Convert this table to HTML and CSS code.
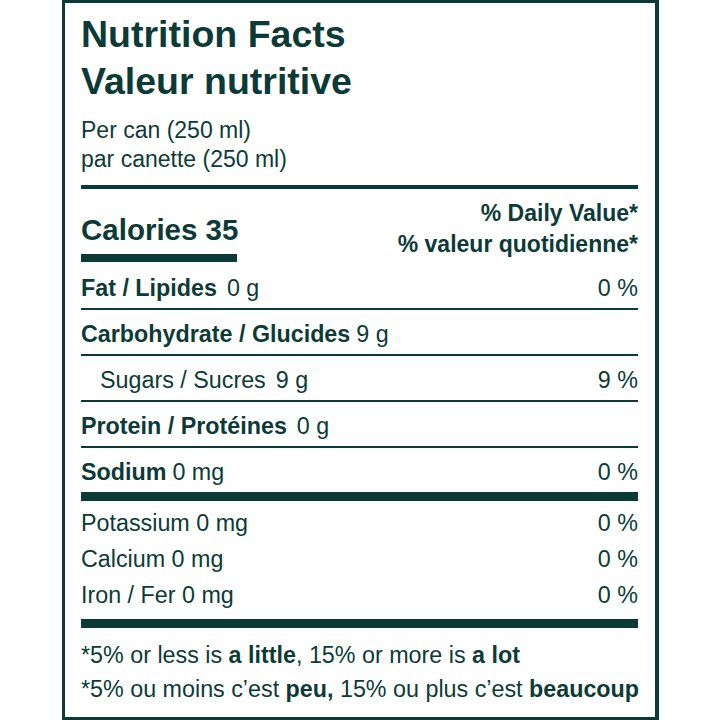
FILE: index.html
```html
<!DOCTYPE html>
<html lang="en">
<head>
<meta charset="utf-8">
<title>Nutrition Facts</title>
<link rel="stylesheet" href="styles.css">
</head>
<body>
<div class="label">
  <h1 class="title">Nutrition Facts<br>Valeur nutritive</h1>
  <p class="serving">Per can (250 ml)<br>par canette (250 ml)</p>
  <div class="rule-top"></div>
  <div class="cal-row">
    <div class="cal-left">
      <div class="calories">Calories 35</div>
      <div class="cal-bar"></div>
    </div>
    <div class="dv-head">% Daily Value*<br>% valeur quotidienne*</div>
  </div>
  <div class="row first"><span><b>Fat / Lipides</b><span class="amt">0 g</span></span><span>0 %</span></div>
  <div class="row"><span><b>Carbohydrate / Glucides</b><span class="amt sm">9 g</span></span><span></span></div>
  <div class="row indent"><span>Sugars / Sucres<span class="amt">9 g</span></span><span>9 %</span></div>
  <div class="row"><span><b>Protein / Protéines</b><span class="amt">0 g</span></span><span></span></div>
  <div class="row last"><span><b>Sodium</b><span class="amt sm">0 mg</span></span><span>0 %</span></div>
  <div class="bar"></div>
  <div class="minerals">
    <div class="mrow"><span>Potassium 0 mg</span><span>0 %</span></div>
    <div class="mrow"><span>Calcium 0 mg</span><span>0 %</span></div>
    <div class="mrow"><span>Iron / Fer 0 mg</span><span>0 %</span></div>
  </div>
  <div class="bar bar2"></div>
  <div class="foot">
    <p>*5% or less is <b>a little</b>, 15% or more is <b>a lot</b></p>
    <p>*5% ou moins c’est <b>peu,</b> 15% ou plus c’est <b>beaucoup</b></p>
  </div>
</div>
</body>
</html>
```

FILE: styles.css
```css
html, body {
  margin: 0;
  padding: 0;
  background: #ffffff;
}
body {
  font-family: "Liberation Sans", Arial, sans-serif;
  color: #0c3b37;
}
.label {
  box-sizing: border-box;
  margin-left: 62px;
  width: 597px;
  height: 720px;
  border: 3px solid #0c3b37;
  border-right-width: 4px;
  padding: 8px 17px 0 16px;
}
.title {
  margin: 0;
  font-size: 37.5px;
  line-height: 47px;
  font-weight: 700;
}
.serving {
  margin: 11px 0 0;
  font-size: 23px;
  line-height: 29px;
}
.rule-top {
  margin-top: 11px;
  height: 4px;
  background: #0c3b37;
}
.cal-row {
  display: flex;
  justify-content: space-between;
  align-items: flex-start;
  padding-top: 9px;
}
.cal-left {
  margin-top: 14px;
  width: 156px;
}
.calories {
  font-size: 29.5px;
  line-height: 36px;
  font-weight: 700;
  white-space: nowrap;
}
.cal-bar {
  margin-top: 6px;
  height: 8px;
  background: #0c3b37;
}
.dv-head {
  text-align: right;
  font-size: 23px;
  line-height: 31px;
  font-weight: 700;
}
.row {
  display: flex;
  justify-content: space-between;
  box-sizing: border-box;
  height: 46px;
  padding-top: 5px;
  line-height: 39px;
  font-size: 23.3px;
  border-bottom: 2px solid #0c3b37;
}
.row.first {
  margin-top: 2px;
}
.row.last {
  border-bottom: 0;
  height: 44px;
}
.row.indent {
  padding-left: 19px;
}
.amt {
  margin-left: 10px;
}
.amt.sm {
  margin-left: 6px;
}
.bar {
  height: 9px;
  background: #0c3b37;
}
.minerals {
  padding-top: 4px;
}
.mrow {
  display: flex;
  justify-content: space-between;
  font-size: 23.3px;
  line-height: 36px;
}
.bar2 {
  margin-top: 6px;
}
.foot {
  padding-top: 10px;
  font-size: 23.3px;
  line-height: 34px;
}
.foot p {
  margin: 0;
  white-space: nowrap;
}
b {
  font-weight: 700;
}
```
